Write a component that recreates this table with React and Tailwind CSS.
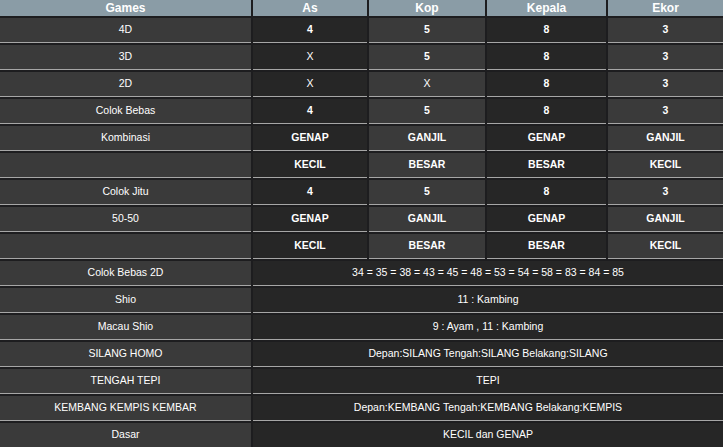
const cols = ["Games", "As", "Kop", "Kepala", "Ekor"];

const rows = [
  ["4D", "4", "5", "8", "3"],
  ["3D", "X", "5", "8", "3"],
  ["2D", "X", "X", "8", "3"],
  ["Colok Bebas", "4", "5", "8", "3"],
  ["Kombinasi", "GENAP", "GANJIL", "GENAP", "GANJIL"],
  ["", "KECIL", "BESAR", "BESAR", "KECIL"],
  ["Colok Jitu", "4", "5", "8", "3"],
  ["50-50", "GENAP", "GANJIL", "GENAP", "GANJIL"],
  ["", "KECIL", "BESAR", "BESAR", "KECIL"],
];

const wide = [
  ["Colok Bebas 2D", "34 = 35 = 38 = 43 = 45 = 48 = 53 = 54 = 58 = 83 = 84 = 85"],
  ["Shio", "11 : Kambing"],
  ["Macau Shio", "9 : Ayam , 11 : Kambing"],
  ["SILANG HOMO", "Depan:SILANG Tengah:SILANG Belakang:SILANG"],
  ["TENGAH TEPI", "TEPI"],
  ["KEMBANG KEMPIS KEMBAR", "Depan:KEMBANG Tengah:KEMBANG Belakang:KEMPIS"],
  ["Dasar", "KECIL dan GENAP"],
];

const cell = "h-[25px] flex items-center justify-center border-b border-[#a6a6a6] text-white";

export default function App() {
  return (
    <div
      className="w-[723px] h-[447px] overflow-hidden bg-[#1d1d1f] text-[10.5px]"
      style={{ fontFamily: '"Liberation Sans", Arial, sans-serif' }}
    >
      <div className="grid grid-cols-[251px_114px_116px_119px_1fr] gap-x-[2px] gap-y-[2px]">
        {cols.map((c) => (
          <div key={c} className="h-[16px] flex items-center justify-center bg-[#8a9ca6] text-white font-bold text-[12px]">
            {c}
          </div>
        ))}

        {rows.map((r, i) =>
          r.map((v, j) => (
            <div
              key={i + "-" + j}
              className={`${cell} ${j % 2 === 0 ? "bg-[#3a3a3a]" : "bg-[#262626]"} ${j > 0 && v !== "X" ? "font-bold" : ""}`}
            >
              {v}
            </div>
          ))
        )}

        {wide.map(([label, value]) => (
          <div key={label} className="contents">
            <div className={`${cell} bg-[#3a3a3a]`}>{label}</div>
            <div className={`${cell} col-span-4 bg-[#262626]`}>{value}</div>
          </div>
        ))}
      </div>
    </div>
  );
}
